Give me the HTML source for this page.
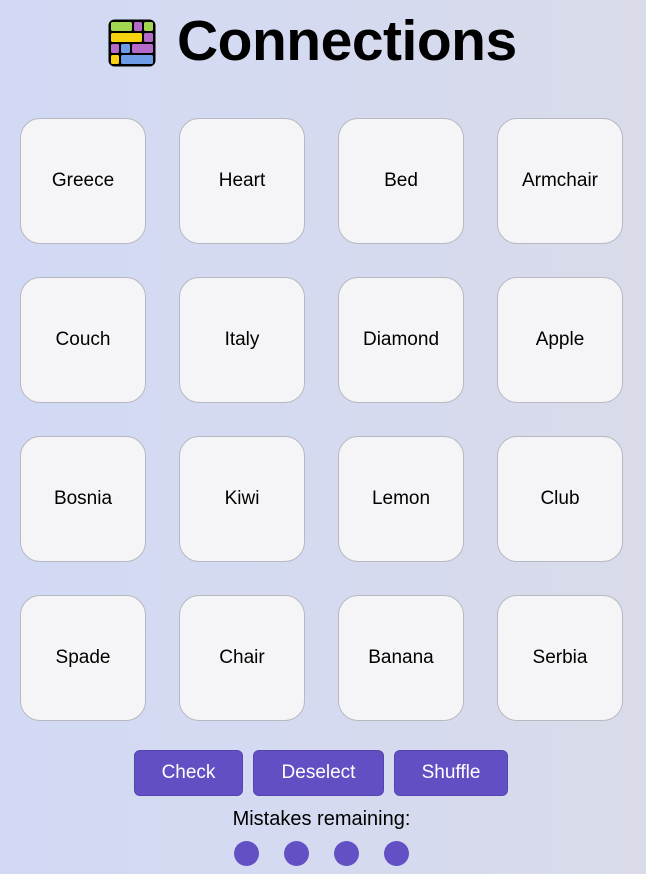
<!DOCTYPE html>
<html><head><meta charset="utf-8"><style>
html,body{margin:0;padding:0}
body{width:646px;height:874px;overflow:hidden;position:relative;background:linear-gradient(90deg,#d1d9f4 0%,#d5daf0 50%,#d9dbe9 100%);font-family:"Liberation Sans",sans-serif}
.title{position:absolute;left:177px;top:6px;font-size:57px;font-weight:bold;color:#000;letter-spacing:-0.5px;line-height:70px}
.logo{position:absolute;left:107px;top:18px}
.t{position:absolute;width:124px;height:124px;border:1px solid #b8b8c0;border-radius:20px;background:#f5f5f7;display:flex;align-items:center;justify-content:center;font-size:19px;color:#000}
.b{position:absolute;top:750px;height:46px;background:#624fc4;border:1px solid #5543b0;border-radius:6px;color:#fff;font-size:19px;display:flex;align-items:center;justify-content:center;box-sizing:border-box}
.d{position:absolute;top:841px;width:25px;height:25px;border-radius:50%;background:#6350c4}
.m{position:absolute;left:0;width:643px;top:808px;text-align:center;font-size:20px;color:#000}
</style></head><body>
<svg class="logo" width="50" height="50" viewBox="0 0 50 50">
<rect x="1.5" y="1.5" width="47" height="47" rx="6" fill="#000"/>
<rect x="4" y="4" width="21" height="9" rx="1.5" fill="#a3d651"/>
<rect x="27" y="4" width="8" height="9" rx="1.5" fill="#b36ac8"/>
<rect x="37" y="4" width="9" height="9" rx="1.5" fill="#a3d651"/>
<rect x="4" y="15" width="31" height="9" rx="1.5" fill="#f8d20e"/>
<rect x="37" y="15" width="9" height="9" rx="1.5" fill="#b36ac8"/>
<rect x="4" y="26" width="8" height="9" rx="1.5" fill="#b36ac8"/>
<rect x="14" y="26" width="9" height="9" rx="1.5" fill="#6f9ce8"/>
<rect x="25" y="26" width="21" height="9" rx="1.5" fill="#b36ac8"/>
<rect x="4" y="37" width="8" height="9" rx="1.5" fill="#f8d20e"/>
<rect x="14" y="37" width="32" height="9" rx="1.5" fill="#6f9ce8"/>
</svg>
<div class="title">Connections</div>
<div class="t" style="left:20px;top:118px">Greece</div>
<div class="t" style="left:179px;top:118px">Heart</div>
<div class="t" style="left:338px;top:118px">Bed</div>
<div class="t" style="left:497px;top:118px">Armchair</div>
<div class="t" style="left:20px;top:277px">Couch</div>
<div class="t" style="left:179px;top:277px">Italy</div>
<div class="t" style="left:338px;top:277px">Diamond</div>
<div class="t" style="left:497px;top:277px">Apple</div>
<div class="t" style="left:20px;top:436px">Bosnia</div>
<div class="t" style="left:179px;top:436px">Kiwi</div>
<div class="t" style="left:338px;top:436px">Lemon</div>
<div class="t" style="left:497px;top:436px">Club</div>
<div class="t" style="left:20px;top:595px">Spade</div>
<div class="t" style="left:179px;top:595px">Chair</div>
<div class="t" style="left:338px;top:595px">Banana</div>
<div class="t" style="left:497px;top:595px">Serbia</div>
<div class="b" style="left:134px;width:109px">Check</div>
<div class="b" style="left:253px;width:131px">Deselect</div>
<div class="b" style="left:394px;width:114px">Shuffle</div>
<div class="m">Mistakes remaining:</div>
<div class="d" style="left:234px"></div>
<div class="d" style="left:284px"></div>
<div class="d" style="left:334px"></div>
<div class="d" style="left:384px"></div>
</body></html>
